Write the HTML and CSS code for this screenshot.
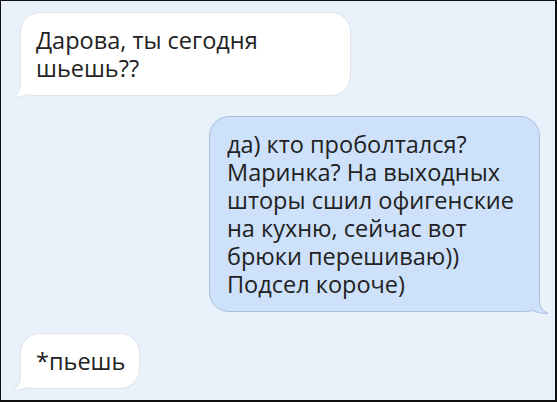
FILE: index.html
```html
<!DOCTYPE html>
<html>
	<head>
		<meta charset="UTF-8">
		<title></title>
		<link rel="stylesheet" href="styles.css">
	</head>
	<body>
		<div class="chat">
			<div class="msg msg-in">
				Дарова, ты сегодня шьешь??
				<svg class="tail tail-in" width="32" height="28" viewBox="0 0 32 28">
					<path class="tail-fill" d="M10.5 0 L10.5 14 C10.5 21 7 25 2 27.5 C8 27.5 13 26.5 17 24.5 C21 25.5 25 25.5 32 25.5 L32 0 Z"/>
					<path class="tail-line" d="M10.5 0 L10.5 14 C10.5 21 7 25 2 27.5 C8 27.5 13 26.5 17 24.5 C21 25.5 25 25.5 32 25.5"/>
				</svg>
			</div>
			<div class="msg msg-out">
				да) кто проболтался? Маринка? На выходных шторы сшил офигенские на кухню, сейчас вот брюки перешиваю)) Подсел короче)
				<svg class="tail tail-out" width="32" height="28" viewBox="0 0 32 28">
					<path class="tail-fill" d="M21.5 0 L21.5 14 C21.5 21 25 25 30 27.5 C24 27.5 19 26.5 15 24.5 C11 25.5 7 25.5 0 25.5 L0 0 Z"/>
					<path class="tail-line" d="M21.5 0 L21.5 14 C21.5 21 25 25 30 27.5 C24 27.5 19 26.5 15 24.5 C11 25.5 7 25.5 0 25.5"/>
				</svg>
			</div>
			<div class="msg msg-in">
				*пьешь
				<svg class="tail tail-in" width="32" height="28" viewBox="0 0 32 28">
					<path class="tail-fill" d="M10.5 0 L10.5 14 C10.5 21 7 25 2 27.5 C8 27.5 13 26.5 17 24.5 C21 25.5 25 25.5 32 25.5 L32 0 Z"/>
					<path class="tail-line" d="M10.5 0 L10.5 14 C10.5 21 7 25 2 27.5 C8 27.5 13 26.5 17 24.5 C21 25.5 25 25.5 32 25.5"/>
				</svg>
			</div>
		</div>
	</body>
</html>
```

FILE: styles.css
```css
*{
	margin: 0;
	padding: 0;
}
body{
	width: 557px;
	height: 402px;
	overflow: hidden;
}
.chat{
	box-sizing: border-box;
	width: 557px;
	height: 402px;
	border-style: solid;
	border-color: #111;
	border-width: 1px 2px 2px 1px;
	background: #e9f1fb;
	padding: 11px 15px 0 19px;
	display: flex;
	flex-direction: column;
	align-items: flex-start;
	gap: 20px;
}
.msg{
	position: relative;
	z-index: 0;
	box-sizing: border-box;
	max-width: 331px;
	padding: 13px 14px 13px 15px;
	border: 1px solid #dfe4ea;
	border-radius: 20px;
	background: #fff;
	color: #222;
	font-family: "Open Sans", "Noto Sans", sans-serif;
	font-size: 23.5px;
	line-height: 28px;
}
.msg-out{
	align-self: flex-end;
	background: #cde1fb;
	border-color: #a9c0dd;
	padding-left: 17px;
}
.msg + .msg-in{
	margin-top: 1px;
}
.tail{
	position: absolute;
	z-index: -1;
	bottom: -3px;
	display: block;
}
.tail-in{
	left: -11px;
}
.tail-out{
	right: -11px;
}
.tail-fill{
	stroke: none;
}
.tail-line{
	fill: none;
	stroke-width: 1;
}
.tail-in .tail-fill{
	fill: #fff;
}
.tail-in .tail-line{
	stroke: #dfe4ea;
}
.tail-out .tail-fill{
	fill: #cde1fb;
}
.tail-out .tail-line{
	stroke: #a9c0dd;
}
```
